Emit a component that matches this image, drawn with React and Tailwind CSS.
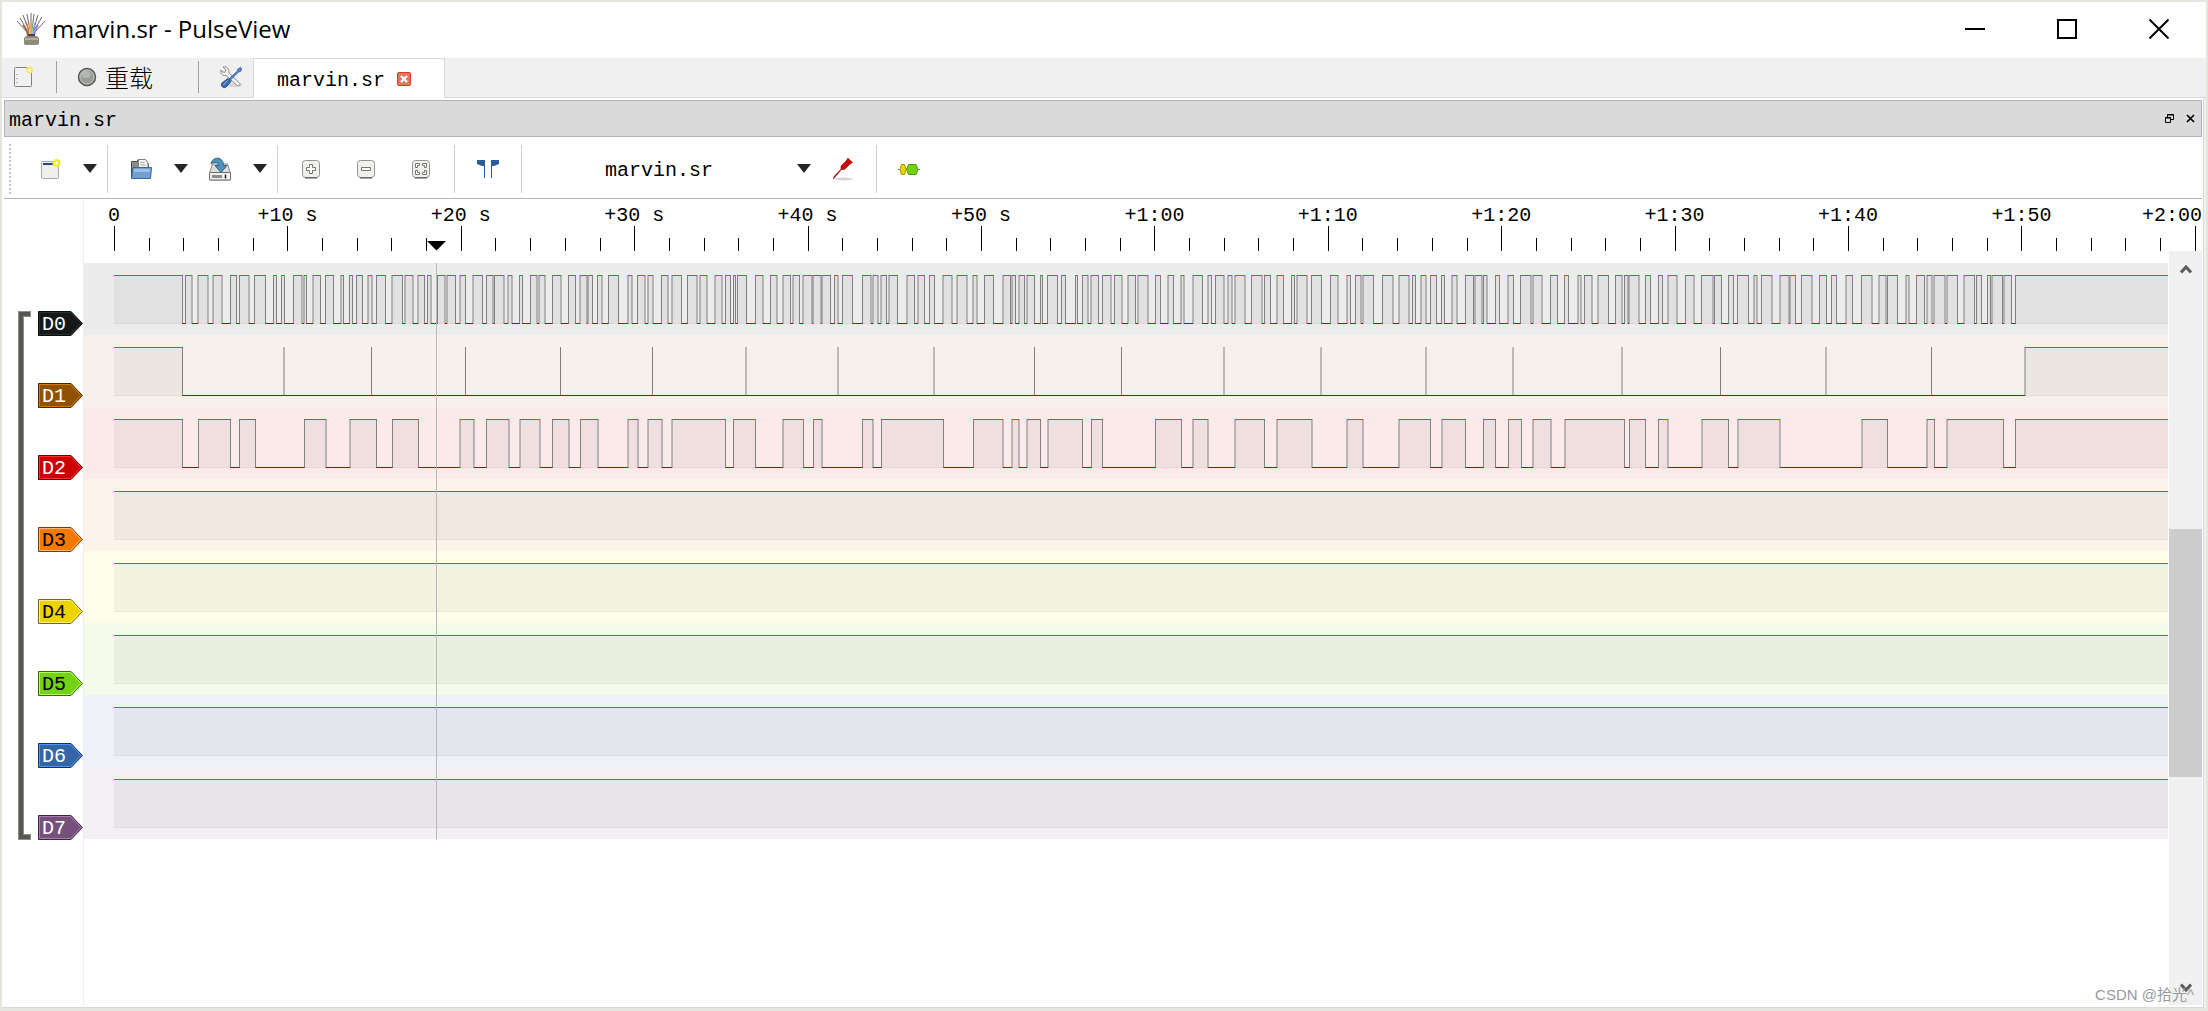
import React, { useState } from 'react';

// All trace times are in view units: 1 unit = 1px at the default window width
const VIEW_X = 84;
const VIEW_W = 2084;
const RULER_W = 2118;
const SECONDS_10 = 173.4;

// [rise, fall] pairs, the level is low everywhere else
const D0 = [
  [114, 182.5], [185.5, 192], [198, 208], [213, 222], [230.5, 236.5], [239.5, 249], [254.5, 265.5],
  [273.5, 276.5], [281.5, 284.5], [293.5, 302], [304, 306.5], [313, 320.5], [325.5, 333.5], [341, 343.5],
  [349.5, 352.5], [356.5, 362.5], [368, 372], [376.5, 385.5], [392, 402.5], [405, 413], [418, 424.5],
  [427.5, 431], [437.5, 445], [447, 455.5], [460, 465.5], [473, 482.5], [486.5, 493], [494.5, 504],
  [508, 512], [519.5, 522.5], [530.5, 537], [539, 545], [552.5, 561], [568.5, 575.5], [580, 587],
  [588, 592.5], [597.5, 602], [608.5, 618.5], [628, 632], [637.5, 645], [648, 653], [661.5, 668],
  [672, 681.5], [687.5, 697], [700, 707], [715, 722], [725.5, 730.5], [733.5, 735.5], [737.5, 746.5],
  [755.5, 763], [770.5, 777], [783, 790.5], [793, 799.5], [803, 812], [813, 821], [822, 830.5],
  [834.5, 838], [842.5, 852.5], [862.5, 871], [873, 878], [881, 886.5], [889, 897.5], [907, 914.5],
  [918, 924.5], [929.5, 934.5], [943, 952], [957, 967], [973, 977], [984.5, 993.5], [1003, 1010.5],
  [1012, 1015.5], [1019, 1024.5], [1027, 1034.5], [1040.5, 1042.5], [1047.5, 1057.5], [1061.5, 1065.5],
  [1075.5, 1077.5], [1082.5, 1088], [1091, 1098.5], [1102.5, 1111], [1114.5, 1122], [1128, 1135.5],
  [1138, 1148], [1155.5, 1160.5], [1168, 1173.5], [1181, 1184], [1193, 1202.5], [1208, 1211.5],
  [1215.5, 1224], [1228, 1232], [1235, 1245], [1251.5, 1262], [1264.5, 1270.5], [1277, 1283.5],
  [1291.5, 1294.5], [1297, 1307], [1311.5, 1321.5], [1330.5, 1338], [1347, 1350.5], [1355.5, 1361],
  [1363, 1373.5], [1382.5, 1393], [1399, 1409], [1412.5, 1415.5], [1421, 1426], [1430.5, 1436.5],
  [1441.5, 1444.5], [1452, 1457], [1465.5, 1473.5], [1475, 1482], [1483.5, 1487], [1495.5, 1499.5],
  [1508, 1513.5], [1520.5, 1531], [1533, 1542], [1550.5, 1557.5], [1564.5, 1568.5], [1578, 1581],
  [1584.5, 1592], [1598, 1608.5], [1615.5, 1622], [1624.5, 1628], [1629, 1639], [1645.5, 1650.5],
  [1658.5, 1662.5], [1668, 1677], [1685.5, 1694], [1701.5, 1713], [1714.5, 1721.5], [1728.5, 1733.5],
  [1737.5, 1748.5], [1754, 1757], [1761.5, 1772], [1780, 1789], [1790, 1795.5], [1801.5, 1812],
  [1819.5, 1826.5], [1831.5, 1836.5], [1846, 1852.5], [1861.5, 1872], [1879, 1886], [1887.5, 1897.5],
  [1906, 1909], [1916.5, 1924.5], [1927, 1932], [1934, 1945], [1947, 1957.5], [1964, 1974.5],
  [1976.5, 1981.5], [1987.5, 1990.5], [1992, 2002.5], [2004, 2011.5], [2015.5, 2168],
];

const D1 = [
  [114, 182.5], [284, 284], [371.5, 371.5], [465.5, 465.5], [560.5, 560.5], [652.5, 652.5], [746, 746],
  [838, 838], [934, 934], [1034.5, 1034.5], [1121.5, 1121.5], [1224, 1224], [1321, 1321], [1426, 1426],
  [1513, 1513], [1622, 1622], [1720.5, 1720.5], [1826, 1826], [1931.5, 1931.5], [2025, 2168],
];

const D2 = [
  [114, 182.5], [198.5, 230.5], [239.5, 255.5], [304.5, 326], [350, 376.5], [392.5, 418.5], [460, 474],
  [486.5, 509], [520, 540], [552.5, 569], [580.5, 598], [628, 638], [648, 662], [672, 725.5],
  [733.5, 755.5], [783, 803.5], [813.5, 822], [862.5, 873], [881.5, 943.5], [973.5, 1003], [1012, 1019],
  [1027, 1040.5], [1048, 1082.5], [1091.5, 1102.5], [1155.5, 1181.5], [1193, 1208], [1235, 1264.5],
  [1277, 1312], [1347, 1363], [1399, 1430.5], [1442, 1465.5], [1483.5, 1495.5], [1508.5, 1521.5],
  [1533, 1551], [1565, 1624.5], [1629.5, 1645.5], [1658.5, 1668], [1702, 1728.5], [1738, 1780],
  [1862, 1887.5], [1927, 1934.5], [1947, 2003.5], [2015.5, 2168],
];

const IDLE = [[114, 2168]];

const CHANNELS = [
  { name: 'D0', row: 'bg-[#ececec]', text: 'text-white', fill: '#16191a', light: '#2b3033', dark: '#0b0d0d', pulses: D0 },
  { name: 'D1', row: 'bg-[#f6f1ea]', text: 'text-white', fill: '#8f5202', light: '#d67b03', dark: '#472901', pulses: D1 },
  { name: 'D2', row: 'bg-[#fbeaea]', text: 'text-white', fill: '#cc0000', light: '#ff3232', dark: '#660000', pulses: D2 },
  { name: 'D3', row: 'bg-[#fef3ea]', text: 'text-black', fill: '#f57900', light: '#ffb870', dark: '#7a3c00', pulses: IDLE },
  { name: 'D4', row: 'bg-[#fefdea]', text: 'text-black', fill: '#edd400', light: '#fff27a', dark: '#766a00', pulses: IDLE },
  { name: 'D5', row: 'bg-[#f4fbea]', text: 'text-black', fill: '#73d216', light: '#b0ff5e', dark: '#39690b', pulses: IDLE },
  { name: 'D6', row: 'bg-[#eef1f7]', text: 'text-white', fill: '#3465a4', light: '#4e97f6', dark: '#1a3252', pulses: IDLE },
  { name: 'D7', row: 'bg-[#f3f0f4]', text: 'text-white', fill: '#75507b', light: '#af78b8', dark: '#3a283d', pulses: IDLE },
];

const TICK_LABELS = ['0', '+10 s', '+20 s', '+30 s', '+40 s', '+50 s', '+1:00', '+1:10', '+1:20', '+1:30', '+1:40', '+1:50', '+2:00'];

const AppIcon = () => (
  <svg className="h-8 w-[30px] shrink-0" viewBox="0 0 30 32" fill="none">
    <g stroke="#6b6b6b" strokeWidth="1">
      <path d="M12 20 1 8M12 19 4 5M13 18 7 2M14 17 11 1M15 17V0M16 17 18 1M17 18 22 2M17 19 26 4M18 20 29 8" />
    </g>
    <path d="M12 24Q11 17 7 12" stroke="#8b6b5a" strokeWidth="1.5" />
    <path d="M13 24Q12.500 15 10 9" stroke="#e06a50" strokeWidth="1.500" />
    <path d="M14.500 24 14 10" stroke="#e8b84a" strokeWidth="1.500" />
    <path d="M15.500 24 16 9" stroke="#86cf72" strokeWidth="1.500" />
    <path d="M16.500 24 19 10" stroke="#6d9ee8" strokeWidth="1.500" />
    <path d="M18 24Q19 17 22 12" stroke="#b56fe0" strokeWidth="1.500" />
    <path d="M12 21h7v4h-7z" fill="#4b3c44" />
    <path d="M8 25l2-2h11l2 2v6l-2 1H9l-1-1z" fill="#8f8a7c" />
    <path d="M9 25h13v2H9z" fill="#b3ae9f" />
  </svg>
);

const NewSessionIcon = () => (
  <svg className="h-[22px] w-5" viewBox="0 0 20 22">
    <rect x=".5" y="1.500" width="17" height="19" rx="1" fill="#f1f1f1" stroke="#7f817d" />
    <path d="M3 8v1M3 12v1M3 16v1" stroke="#777" />
    <circle cx="15.500" cy="4" r="3.500" fill="#f4e76a" />
    <circle cx="15.500" cy="4" r="1.500" fill="#fffde0" />
  </svg>
);

const RunIcon = () => (
  <svg className="h-5 w-5" viewBox="0 0 20 20">
    <circle cx="10" cy="10" r="8.500" fill="#999c96" stroke="#555753" strokeWidth="1.500" />
    <circle cx="10" cy="10" r="7" fill="none" stroke="#c3c5c0" />
    <ellipse cx="9" cy="7.500" rx="4.500" ry="3.500" fill="#b4b7b1" />
  </svg>
);

const ToolsIcon = () => (
  <svg className="h-6 w-[22px]" viewBox="0 0 22 24">
    <ellipse cx="14" cy="20" rx="8" ry="2" fill="#d6d6d6" />
    <path d="M3 2l3 3-1.500 2.500L2 6.500 1 5c-1 3 1 6 5 5.500l11 10c2 1.500 4-1 2.500-2.500L9 8C9.500 4 7 1 3 2z" fill="#eeeeec" stroke="#888a85" />
    <path d="M20.500 2.500 18 4l-.5 2L9 14l1.200 1.200L18.500 7l2-.5 1-2.500z" fill="#5c8fd0" stroke="#3465a4" />
    <path d="M8 13.500l3 3-5 5.500c-2 2-6-1-4-4z" fill="#3d6dad" stroke="#204a87" />
    <path d="M7.500 15.500 3.500 20" stroke="#9dbce2" />
  </svg>
);

const NewViewIcon = () => (
  <svg className="h-6 w-6" viewBox="0 0 24 24">
    <rect x="2.500" y="4.500" width="17" height="17" rx="1" fill="#efefed" stroke="#a9aba7" />
    <path d="M4 6h15v2H4z" fill="#204a87" />
    <circle cx="17.500" cy="6" r="4" fill="#f6ea3a" />
    <circle cx="17.500" cy="6" r="1.500" fill="#fffde0" />
  </svg>
);

const OpenIcon = () => (
  <svg className="h-6 w-6" viewBox="0 0 24 24">
    <path d="M2.500 20V4.500h6V3h8l3 4v13z" fill="#8a8c88" stroke="#4c4e4a" />
    <path d="M9.500 2.500h7l2.500 3.500V13h-9.500z" fill="#f2f2f0" stroke="#7f817d" />
    <path d="M11.500 5.500h4M11.500 8h5" stroke="#aaa" />
    <path d="M4 10.500h18.500l-1 11H2.500z" fill="#729fcf" stroke="#3465a4" />
    <path d="M5 12h16l-.3 3H4.700z" fill="#9cbfe6" />
  </svg>
);

const SaveIcon = () => (
  <svg className="h-6 w-6" viewBox="0 0 24 24">
    <path d="M4.500 7h15l3 9v7h-21v-7z" fill="#dcdcda" stroke="#888a85" />
    <rect x="1.500" y="15.500" width="21" height="7.500" rx="1" fill="#f1f1ef" stroke="#6a6c68" />
    <path d="M4 18h10v3H4z" fill="#8a8c88" />
    <path d="M17.500 17.500v4" stroke="#222" strokeWidth="1.500" />
    <path d="M3 7C4 2 8 .5 11 1.500c3.500 1 4.500 4 4.500 7h3.500L13 15.500 7 8.500h3.500C10.500 5.500 7 4 3 7z" fill="#4f93bd" stroke="#2b6287" />
  </svg>
);

const ZoomFrame = ({ children }) => (
  <svg className="h-5 w-5" viewBox="0 0 20 20" fill="none">
    <rect x="1.500" y="1.500" width="17" height="17" rx="3" fill="#f0f0ee" stroke="#92948f" />
    <path d="M4 18.800h12" stroke="#666864" strokeWidth="1.500" />
    {children}
  </svg>
);

const ZoomInIcon = () => (
  <ZoomFrame>
    <path d="M8.500 5.500h3v3h3v3h-3v3h-3v-3h-3v-3h3z" fill="#fff" stroke="#747671" />
  </ZoomFrame>
);

const ZoomOutIcon = () => (
  <ZoomFrame>
    <path d="M5.500 8.500h9v3h-9z" fill="#fff" stroke="#747671" />
  </ZoomFrame>
);

const ZoomFitIcon = () => (
  <ZoomFrame>
    <path d="M8.500 4.500h-4v4h2v-2h2zM11.500 4.500h4v4h-2v-2h-2zM8.500 15.500h-4v-4h2v2h2zM11.500 15.500h4v-4h-2v2h-2z" fill="#fff" stroke="#747671" />
  </ZoomFrame>
);

const CursorsIcon = () => (
  <svg className="h-6 w-6" viewBox="0 0 24 24" fill="#2b5c9e">
    <path d="M1 3h8v18H8V9H6L1 7zM23 3h-8v18h1V9h2l5-2z" />
  </svg>
);

const ProbeIcon = () => (
  <svg className="h-6 w-6" viewBox="0 0 24 24">
    <ellipse cx="13" cy="22" rx="9" ry="1.500" fill="#d4d4d4" />
    <path d="M2.500 22 3 19.500 10 12l0-3 5-5 2-3 4.500 4.500-3 2-5 5h-3L4 20z" fill="#cc0000" stroke="#8c0000" strokeWidth=".5" />
  </svg>
);

const DecoderIcon = () => (
  <svg className="h-6 w-6" viewBox="0 0 24 24">
    <path d="M0 12.500h22" stroke="#777" />
    <path d="M2 12.500 3.500 7.500h3L8 12.500l-1.500 5h-3z" fill="#edd400" stroke="#a69400" />
    <path d="M8.500 12.500 10.500 7.500h7.500l2 5-2 5h-7.500z" fill="#73d216" stroke="#4e9a06" />
  </svg>
);

const DropArrow = () => (
  <svg className="h-[9px] w-[14px]" viewBox="0 0 14 9">
    <path d="M0 0h14L7 9z" fill="#262626" />
  </svg>
);

const ToolButton = ({ label, className = '', children }) => (
  <button type="button" aria-label={label} className={`flex h-10 shrink-0 items-center justify-center ${className}`}>
    {children}
  </button>
);

const Divider = () => <div className="h-12 w-px shrink-0 bg-[#cfcfcf]" />;

const TitleBar = () => (
  <header className="flex h-14 items-center bg-white pb-[2px] pl-[14px] pr-px">
    <AppIcon />
    <h1 className="flex-1 pl-[6px] font-['Open_Sans',sans-serif] text-[24px] leading-8 text-black">marvin.sr - PulseView</h1>
    <button type="button" aria-label="Minimize" className="flex h-12 w-[92px] items-center justify-center">
      <svg className="h-5 w-5" viewBox="0 0 20 20"><path d="M0 10h20" stroke="#000" strokeWidth="2" /></svg>
    </button>
    <button type="button" aria-label="Maximize" className="flex h-12 w-[92px] items-center justify-center">
      <svg className="h-5 w-5" viewBox="0 0 20 20"><path d="M1 1h18v18H1z" fill="none" stroke="#000" strokeWidth="2" /></svg>
    </button>
    <button type="button" aria-label="Close" className="flex h-12 w-[92px] items-center justify-center">
      <svg className="h-5 w-5" viewBox="0 0 20 20"><path d="M.5.5l19 19M19.500.5l-19 19" stroke="#000" strokeWidth="2" /></svg>
    </button>
  </header>
);

const TabStrip = () => (
  <nav className="flex h-10 border-b border-[#d9d9d9] bg-[#f0f0f0] pl-[10px]">
    <ToolButton label="New session" className="w-6 pb-[2px]"><NewSessionIcon /></ToolButton>
    <div className="ml-5 mt-[3px] h-8 w-px bg-[#a0a0a0]" />
    <button type="button" className="ml-5 flex h-10 w-[121px] shrink-0 items-center gap-2 pb-[2px]">
      <RunIcon />
      <span className="font-['Noto_Sans_CJK_SC',sans-serif] text-[24px] font-light leading-8 text-black">重载</span>
    </button>
    <div className="mt-[3px] h-8 w-px bg-[#a0a0a0]" />
    <ToolButton label="Settings" className="w-[54px] pb-[2px] pl-[10px]"><ToolsIcon /></ToolButton>
    <div className="-mb-px flex w-[192px] items-center border-x border-t border-[#d9d9d9] bg-white pl-[23px]">
      <button type="button" className="w-[108px] pt-1 text-left text-[20px] leading-8">marvin.sr</button>
      <button type="button" aria-label="Close tab" className="ml-3">
        <svg className="h-[14px] w-[14px]" viewBox="0 0 14 14">
          <rect x=".5" y=".5" width="13" height="13" rx="1.500" fill="#e0785a" stroke="#dc3a28" />
          <path d="M4 4l6 6M10 4l-6 6" stroke="#fff" strokeWidth="2.200" />
        </svg>
      </button>
    </div>
  </nav>
);

const DockTitle = () => (
  <div className="flex h-[37px] items-center border border-[#b4b4b4] bg-[#dadada] pl-1 pr-[6px]">
    <h2 className="flex-1 pt-1 text-[20px] leading-8">marvin.sr</h2>
    <button type="button" aria-label="Float" className="mr-3">
      <svg className="h-[9px] w-[9px]" viewBox="0 0 9 9" fill="none" stroke="#000">
        <path d="M2.500 3V.5h6v5H6M2 1h7" />
        <path d="M.5 3.500h5v5h-5zM0 4h6" />
      </svg>
    </button>
    <button type="button" aria-label="Close view">
      <svg className="h-[9px] w-[9px]" viewBox="0 0 9 9"><path d="M1 1l7 7M8 1l-7 7" stroke="#000" strokeWidth="1.700" /></svg>
    </button>
  </div>
);

const Toolbar = () => {
  const [device, setDevice] = useState('marvin.sr');

  return (
    <div className="flex h-[62px] items-center border-b border-[#b4b4b4] pl-[5px] pt-[2px]">
      <div className="h-[50px] w-0 border-l-2 border-dotted border-[#c4c4c4]" />
      <ToolButton label="New view" className="ml-7 w-6"><NewViewIcon /></ToolButton>
      <ToolButton label="New view menu" className="ml-5 mr-[10px] w-[14px]"><DropArrow /></ToolButton>
      <Divider />
      <ToolButton label="Open" className="ml-[21px] w-6"><OpenIcon /></ToolButton>
      <ToolButton label="Open menu" className="ml-[21px] w-[14px]"><DropArrow /></ToolButton>
      <ToolButton label="Save" className="ml-5 w-6"><SaveIcon /></ToolButton>
      <ToolButton label="Save menu" className="ml-[21px] mr-[10px] w-[14px]"><DropArrow /></ToolButton>
      <Divider />
      <ToolButton label="Zoom in" className="ml-[23px] w-5"><ZoomInIcon /></ToolButton>
      <ToolButton label="Zoom out" className="ml-[35px] w-5"><ZoomOutIcon /></ToolButton>
      <ToolButton label="Zoom to fit" className="ml-[35px] mr-[23px] w-5"><ZoomFitIcon /></ToolButton>
      <Divider />
      <ToolButton label="Show cursors" className="mx-[21px] w-6"><CursorsIcon /></ToolButton>
      <Divider />
      <div className="ml-[83px] flex w-[206px] items-center">
        <select
          aria-label="Device"
          value={device}
          onChange={(e) => setDevice(e.target.value)}
          className="w-full appearance-none bg-transparent pt-1 text-[20px] leading-8"
        >
          <option>marvin.sr</option>
        </select>
        <span className="pointer-events-none shrink-0"><DropArrow /></span>
      </div>
      <ToolButton label="Configure channels" className="ml-5 mr-[21px] w-6"><ProbeIcon /></ToolButton>
      <Divider />
      <ToolButton label="Add decoder" className="ml-[21px] w-6"><DecoderIcon /></ToolButton>
    </div>
  );
};

const Ruler = () => {
  const ticks = Array.from({ length: 61 }, (_, i) => ({
    x: Math.round(114 - VIEW_X + (i * SECONDS_10) / 5) + 0.5,
    major: i % 5 === 0,
  }));

  return (
    <div className="relative h-16">
      {TICK_LABELS.map((label, i) => {
        const last = i === TICK_LABELS.length - 1;
        const left = `${((30 + i * SECONDS_10) / RULER_W) * 100}%`;
        return (
          <span
            key={label}
            className={`absolute top-px whitespace-nowrap text-[20px] leading-8 ${last ? 'right-0' : '-translate-x-1/2'}`}
            style={last ? undefined : { left }}
          >
            {label}
          </span>
        );
      })}
      <svg className="absolute inset-x-0 top-[27px] h-[25px] w-full" viewBox={`0 0 ${RULER_W} 25`} preserveAspectRatio="none">
        {ticks.map((t) => (
          <path key={t.x} d={`M${t.x} ${t.major ? 0 : 12}V25`} stroke="#000" />
        ))}
        <path d="M343 15h19l-9.500 9.500z" fill="#000" />
      </svg>
    </div>
  );
};

const Trace = ({ pulses }) => {
  const shifted = pulses.map(([a, b]) => [a - VIEW_X, b - VIEW_X]);
  const high = shifted.map(([a, b]) => (b > a ? `M${a} 12.5H${b}` : '')).join('');
  const fill = shifted.map(([a, b]) => `M${a} 13H${b}V61H${a}z`).join('');
  const low = shifted.slice(1).map(([a], i) => `M${shifted[i][1]} 60.5H${a}`).join('');
  const edges = shifted
    .map(([a, b]) => (a > 30 ? `M${a} 12V61` : '') + (b > a && b < VIEW_W ? `M${b} 12V61` : ''))
    .join('');

  return (
    <svg className="block h-full w-full" viewBox={`0 0 ${VIEW_W} 72`} preserveAspectRatio="none" fill="none">
      <path d={fill} fill="#000" fillOpacity=".045" />
      <path d={shifted.map(([a, b]) => `M${a} 60.5H${b}`).join('')} stroke="#000" strokeOpacity=".04" />
      <path d={edges} stroke="#808080" />
      <path d={high} stroke="#00b400" />
      <path d={low} stroke="#b80000" />
    </svg>
  );
};

const ChannelTag = ({ channel }) => (
  <button type="button" className={`relative block h-[25px] w-[45px] pl-1 text-left text-[20px] leading-7 ${channel.text}`}>
    <svg className="absolute inset-0 h-full w-full" viewBox="0 0 45 25">
      <path d="M.5.5h32.500l11.500 12-11.500 12H.5z" fill={channel.fill} stroke={channel.dark} />
      <path d="M1.500 1.500h31l10.500 11-10.500 11h-31z" fill="none" stroke={channel.light} />
    </svg>
    <span className="relative">{channel.name}</span>
  </button>
);

const ChannelHeader = () => (
  <div className="flex w-20 shrink-0 border-r border-[#eeeeee] pl-[14px] pt-16">
    <svg className="mt-12 h-[529px] w-[13px] shrink-0" viewBox="0 0 13 529" fill="none">
      <path d="M13 3H3v523h10" stroke="#8e8f8c" strokeWidth="6" />
      <path d="M12 3H3v523h9" stroke="#555753" strokeWidth="4" />
    </svg>
    <ul className="-mr-px ml-[7px]">
      {CHANNELS.map((c) => (
        <li key={c.name} className="h-[72px] pt-12"><ChannelTag channel={c} /></li>
      ))}
    </ul>
  </div>
);

const ScrollBar = () => (
  <div className="-mt-3 ml-px flex w-[33px] shrink-0 flex-col items-center bg-[#f0f0f0]">
    <button type="button" aria-label="Scroll up" className="flex h-9 items-center">
      <svg className="h-[11px] w-3" viewBox="0 0 12 11"><path d="M1 8.500 6 3l5 5.500" fill="none" stroke="#5c5c5c" strokeWidth="3" /></svg>
    </button>
    <div className="h-[242px] shrink-0" />
    <div className="h-[248px] w-full shrink-0 bg-[#cdcdcd]" />
    <div className="flex-1" />
    <button type="button" aria-label="Scroll down" className="flex h-9 items-center">
      <svg className="h-[11px] w-3" viewBox="0 0 12 11"><path d="M1 2.500 6 8l5-5.500" fill="none" stroke="#5c5c5c" strokeWidth="3" /></svg>
    </button>
  </div>
);

const TraceView = () => (
  <div className="flex flex-1">
    <ChannelHeader />
    <div className="flex min-w-0 flex-1 flex-col">
      <Ruler />
      <div className="flex flex-1">
        <div className="relative min-w-0 flex-1">
          {CHANNELS.map((c) => (
            <div key={c.name} className={`h-[72px] ${c.row}`}><Trace pulses={c.pulses} /></div>
          ))}
          {/* hover time marker */}
          <div className="absolute top-0 h-[577px] w-px bg-[#b9b9b9]" style={{ left: `${(352 / VIEW_W) * 100}%` }} />
        </div>
        <ScrollBar />
      </div>
    </div>
  </div>
);

export default function App() {
  return (
    <div className="relative flex min-h-screen flex-col bg-[#e5e5df] px-[2px] pb-[3px] pt-[2px] font-['Liberation_Mono','Noto_Sans_CJK_SC',monospace] text-black">
      <TitleBar />
      <TabStrip />
      <main className="flex flex-1 flex-col border-r-2 border-[#f0f0f0]">
        <div className="flex flex-1 flex-col border-b border-r border-[#d9d9d9] bg-white pb-[2px] pl-[2px] pr-px pt-[2px]">
          <DockTitle />
          <Toolbar />
          <TraceView />
        </div>
      </main>
      <p className="pointer-events-none absolute bottom-1 right-[14px] font-['Liberation_Sans','Noto_Sans_CJK_SC',sans-serif] text-[15px] leading-6 text-[#999999]">
        CSDN @拾光^
      </p>
    </div>
  );
}
